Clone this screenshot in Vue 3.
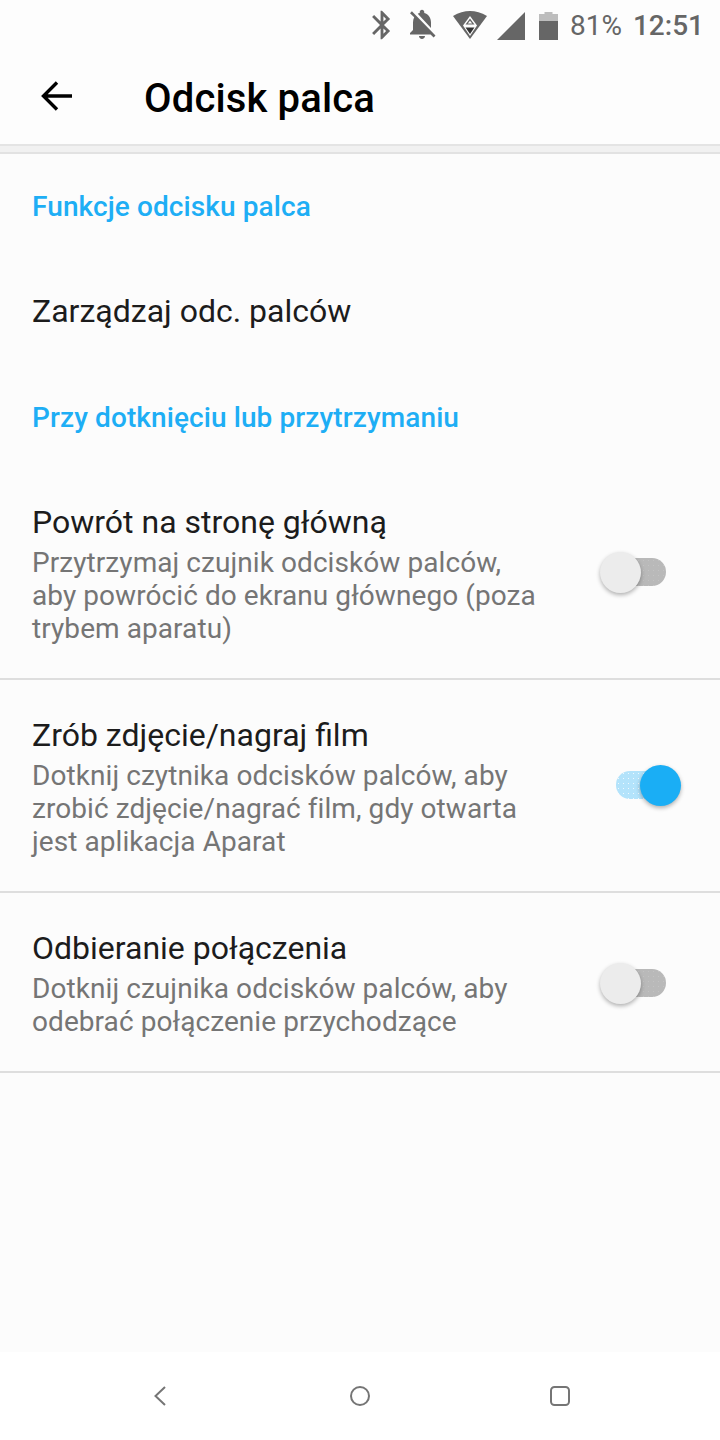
<template>
  <div class="screen">
    <div class="status">
      <svg class="ic-bt" viewBox="0 0 24 24" width="34" height="34">
        <path d="M17.71 7.71L12 2h-1v7.59L6.41 5 5 6.41 10.59 12 5 17.59 6.41 19 11 14.41V22h1l5.71-5.71-4.3-4.29 4.3-4.29zM13 5.83l1.88 1.88L13 9.59V5.83zm1.88 10.46L13 18.17v-3.76l1.88 1.88z" />
      </svg>
      <svg class="ic-bell" viewBox="0 0 24 24" width="36" height="36">
        <path d="M20 18.69L7.84 6.14 5.27 3.49 4 4.76l2.8 2.8v.01c-.52.99-.8 2.16-.8 3.42v5l-2 2v1h13.73l2 2L21 19.72l-1-1.03zM12 22c1.11 0 2-.89 2-2h-4c0 1.11.89 2 2 2zm6-7.32V11c0-3.08-1.64-5.64-4.5-6.32V4c0-.83-.67-1.5-1.5-1.5s-1.5.67-1.5 1.5v.68c-.15.03-.29.08-.42.12-.1.03-.2.07-.3.11h-.01c-.2.08-.4.17-.59.27-.01 0-.01 0-.02.01L18 14.68z" />
      </svg>
      <svg class="ic-wifi" viewBox="0 0 36 30" width="36" height="30">
        <path d="M1 6 Q18 -4 35 6 L18 29 Z" />
        <path d="M18 6 L25 15.5 L18 26 L11 15.5 Z" fill="#fdfdfd" />
        <path d="M18 8.5 L22.5 14.5 H13.5 Z M18 10.8 L15.8 13.4 H20.2 Z" fill-rule="evenodd" />
        <path d="M13.5 17.5 H22.5 L18 24 Z" fill="#333" />
      </svg>
      <svg class="ic-signal" viewBox="0 0 28 28" width="28" height="28">
        <path d="M0 28 L28 0 V28 Z" />
      </svg>
      <svg class="ic-batt" viewBox="0 0 19 28" width="19" height="28">
        <path d="M5.5 0 H13.5 V2 H19 V9 H0 V2 H5.5 Z" fill="#bdbdbd" />
        <rect y="9" width="19" height="19" />
      </svg>
      <span class="pct">81%</span>
      <span class="time">12:51</span>
    </div>

    <header class="appbar">
      <svg class="back" viewBox="0 0 36 36" width="36" height="36">
        <path d="M33 18 H5 M18 4.5 L4.5 18 L18 31.5" fill="none" stroke="#000" stroke-width="3.4" />
      </svg>
      <h1>Odcisk palca</h1>
    </header>
    <div class="band"></div>

    <div class="section first">Funkcje odcisku palca</div>
    <div class="plain">Zarządzaj odc. palców</div>
    <div class="section second">Przy dotknięciu lub przytrzymaniu</div>

    <div v-for="item in items" :key="item.title" class="row">
      <div class="text">
        <div class="title">{{ item.title }}</div>
        <div class="sub">{{ item.sub }}</div>
      </div>
      <div class="toggle" :class="{ on: item.on, low: item.low }">
        <div class="track"></div>
        <div class="thumb"></div>
      </div>
    </div>

    <div class="spacer"></div>

    <nav class="navbar">
      <svg viewBox="0 0 24 24" width="24" height="24">
        <path d="M17 3 L7.5 12 L17 21" fill="none" stroke="#757575" stroke-width="2" />
      </svg>
      <svg viewBox="0 0 24 24" width="24" height="24">
        <circle cx="12" cy="12" r="9" fill="none" stroke="#757575" stroke-width="2" />
      </svg>
      <svg viewBox="0 0 24 24" width="24" height="24">
        <rect x="3" y="3" width="18" height="18" rx="3.5" fill="none" stroke="#757575" stroke-width="2" />
      </svg>
    </nav>
  </div>
</template>

<script setup>
const items = [
  {
    title: 'Powrót na stronę główną',
    sub: 'Przytrzymaj czujnik odcisków palców, aby powrócić do ekranu głównego (poza trybem aparatu)',
    on: false,
  },
  {
    title: 'Zrób zdjęcie/nagraj film',
    sub: 'Dotknij czytnika odcisków palców, aby zrobić zdjęcie/nagrać film, gdy otwarta jest aplikacja Aparat',
    on: true,
  },
  {
    title: 'Odbieranie połączenia',
    sub: 'Dotknij czujnika odcisków palców, aby odebrać połączenie przychodzące',
    on: false,
    low: true,
  },
];
</script>

<style>
html, body {
  margin: 0;
  background: #fafafa;
}
</style>

<style scoped>
.screen {
  width: 720px;
  height: 1440px;
  display: flex;
  flex-direction: column;
  background: #fcfcfc;
  font-family: Roboto, sans-serif;
  overflow: hidden;
}

.status {
  height: 50px;
  flex: none;
  display: flex;
  align-items: center;
  justify-content: flex-end;
  padding-right: 16px;
  background: #fdfdfd;
  color: #666;
  font-size: 28px;
}

.status svg {
  fill: #666;
  flex: none;
}

.ic-bt { margin-right: 5px; }
.ic-bell { margin: 0 12px 2px 0; }
.ic-wifi { margin-right: 9px; }
.ic-signal { margin: 2px 14px 0 0; }
.ic-batt { margin: 1px 12px 0 0; }

.pct {
  margin-right: 11px;
}

.time {
  font-weight: 500;
}

.appbar {
  height: 96px;
  flex: none;
  display: flex;
  align-items: center;
  padding: 2px 0 0 39px;
  box-sizing: border-box;
  background: #fdfdfd;
  border-bottom: 2px solid #e4e4e4;
}

.back {
  margin-bottom: 4px;
}

.appbar h1 {
  margin: 0 0 0 69px;
  font-size: 40px;
  font-weight: 500;
  letter-spacing: 0.15px;
  color: #000;
}

.band {
  height: 6px;
  flex: none;
  background: #f1f1f1;
  border-bottom: 2px solid #e2e2e2;
}

.section {
  flex: none;
  padding-left: 32px;
  font-size: 28px;
  font-weight: 500;
  letter-spacing: 0.1px;
  color: #1eaef5;
  display: flex;
  align-items: center;
}

.section.first { height: 104px; }

.section.second {
  height: 106px;
  margin-bottom: -3px;
}

.plain {
  flex: none;
  height: 106px;
  padding-left: 32px;
  display: flex;
  align-items: center;
  font-size: 32px;
  color: #1c1c1c;
}

.row {
  flex: none;
  display: flex;
  align-items: center;
  justify-content: space-between;
  padding: 32px 39px 33px 32px;
  border-bottom: 2px solid #dedede;
}

.text {
  width: 510px;
}

.title {
  font-size: 32px;
  line-height: 47px;
  color: #1c1c1c;
}

.sub {
  font-size: 28px;
  line-height: 33px;
  letter-spacing: 0.07px;
  color: #757575;
}

.toggle {
  position: relative;
  width: 81px;
  height: 41px;
  flex: none;
}

.toggle.low {
  margin-top: 3px;
}

.track {
  position: absolute;
  left: 16px;
  top: 6px;
  width: 50px;
  height: 28px;
  border-radius: 14px;
  background-color: #b9b9b9;
  background-image: radial-gradient(rgba(255, 255, 255, 0.15) 0.6px, transparent 1px);
  background-size: 5px 5px;
}

.thumb {
  position: absolute;
  left: 0;
  top: 0;
  width: 41px;
  height: 41px;
  border-radius: 50%;
  background: #ececec;
  box-shadow: 0 2px 4px rgba(0, 0, 0, 0.3);
}

.toggle.on .track {
  background-color: #b3e3fb;
  background-image: radial-gradient(rgba(255, 255, 255, 0.8) 0.6px, transparent 1px);
}

.toggle.on .thumb {
  left: 40px;
  background: #1aaef5;
}

.spacer {
  flex: 1;
}

.navbar {
  height: 88px;
  flex: none;
  background: #fff;
  display: flex;
  align-items: center;
  justify-content: space-between;
  padding: 0 148px;
}
</style>
